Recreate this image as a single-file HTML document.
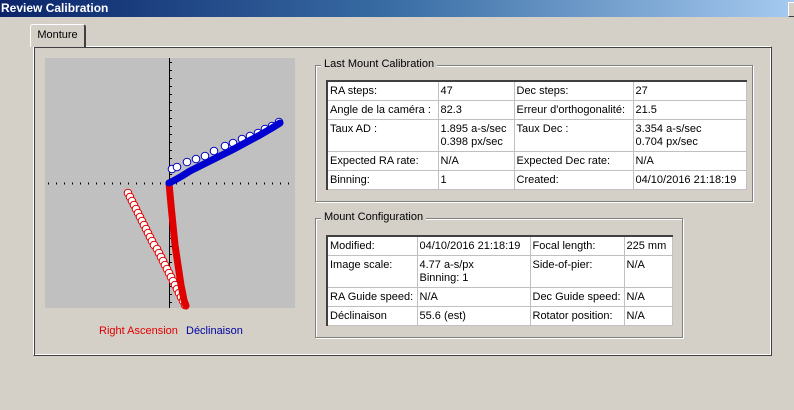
<!DOCTYPE html>
<html><head><meta charset="utf-8"><style>
body{margin:0;width:794px;height:410px;background:#d4d0c8;font-family:"Liberation Sans",sans-serif;font-size:11px;position:relative;overflow:hidden;color:#000}
.title{position:absolute;left:0;top:0;width:794px;height:17px;background:linear-gradient(90deg,#0a246a,#3a6ea5 50%,#a6caf0);color:#fff;font-weight:bold;font-size:12px;line-height:17px;padding-left:1px}
.close{position:absolute;left:788px;top:2px;width:12px;height:13px;background:#d4d0c8;border:1px solid #fff;border-right-color:#404040;border-bottom-color:#404040}
.tab{position:absolute;left:30px;top:24px;width:53px;height:22px;background:#d4d0c8;border:1px solid #fff;border-bottom:none;border-right:2px solid #404040;border-radius:3px 3px 0 0;line-height:20px;text-align:center;z-index:2}
.panel{position:absolute;left:33px;top:46px;width:737px;height:308px;border:1px solid #fff;border-right-color:#404040;border-bottom-color:#404040;box-shadow:inset 1px 1px 0 #404040,inset -1px -1px 0 #fff}
.grp{position:absolute;border:1px solid #808080;box-shadow:1px 1px 0 #fff,inset 1px 1px 0 #fff}
.grp .lg{position:absolute;top:-8px;left:5px;background:#d4d0c8;padding:0 3px;font-size:11px}
table{position:absolute;border-collapse:collapse;background:#fff;border:1px solid #808080;border-top:2px solid #404040;border-left:2px solid #404040}
td{border:1px solid #c0c0c0;padding:3px 2px 2px 2px;vertical-align:top;line-height:13px;white-space:nowrap;font-size:11px;box-sizing:border-box}
tr{height:19px}
tr.t{height:32px}
</style></head><body>
<div class="title">Review Calibration</div>
<div class="close"></div>
<div class="tab">Monture</div>
<div class="panel"></div>
<svg style="position:absolute;left:0;top:0" width="794" height="410">
<rect x="45" y="58" width="250" height="250" fill="#c0c0c0"/>
<line x1="169.5" y1="58" x2="169.5" y2="308" stroke="#000" stroke-width="1"/>
<line x1="171" y1="62" x2="171" y2="308" stroke="#000" stroke-width="2" stroke-dasharray="1 7"/>
<line x1="48" y1="183.5" x2="295" y2="183.5" stroke="#000" stroke-width="2" stroke-dasharray="1 7"/>
<g fill="#fff" stroke="#e00000" stroke-width="1">
<circle cx="128" cy="193" r="3.8"/><circle cx="130" cy="197" r="3.8"/><circle cx="132" cy="201" r="3.8"/><circle cx="134" cy="205" r="3.8"/><circle cx="136" cy="209" r="3.8"/><circle cx="138" cy="213" r="3.8"/><circle cx="140" cy="217" r="3.8"/><circle cx="142" cy="221" r="3.8"/><circle cx="144" cy="225" r="3.8"/><circle cx="146" cy="229" r="3.8"/><circle cx="148" cy="233" r="3.8"/><circle cx="150" cy="237" r="3.8"/><circle cx="152" cy="241" r="3.8"/><circle cx="154" cy="245" r="3.8"/><circle cx="157" cy="249" r="3.8"/><circle cx="159" cy="253" r="3.8"/><circle cx="161" cy="257" r="3.8"/><circle cx="163" cy="261" r="3.8"/><circle cx="165" cy="265" r="3.8"/><circle cx="167" cy="269" r="3.8"/><circle cx="169" cy="273" r="3.8"/><circle cx="171" cy="277" r="3.8"/><circle cx="173" cy="281" r="3.8"/><circle cx="175" cy="285" r="3.8"/><circle cx="177" cy="289" r="3.8"/><circle cx="179" cy="293" r="3.8"/><circle cx="181" cy="297" r="3.8"/><circle cx="183" cy="301" r="3.8"/><circle cx="185" cy="305" r="3.8"/>
</g>
<polyline points="169,183 171,205 173,225 175,245 178,265 181,285 184,300 186,306" fill="none" stroke="#e00000" stroke-width="7" stroke-linecap="round"/>
<g fill="#fff" stroke="#0000c0" stroke-width="1">
<circle cx="172" cy="169" r="3.8"/><circle cx="177" cy="167" r="3.8"/><circle cx="187" cy="162" r="3.8"/><circle cx="196" cy="159" r="3.8"/><circle cx="205" cy="156" r="3.8"/><circle cx="214" cy="151" r="3.8"/><circle cx="225" cy="146" r="3.8"/><circle cx="233" cy="143" r="3.8"/><circle cx="242" cy="139" r="3.8"/><circle cx="250" cy="136" r="3.8"/><circle cx="258" cy="133" r="3.8"/><circle cx="265" cy="129" r="3.8"/><circle cx="272" cy="126" r="3.8"/><circle cx="279" cy="122" r="3.8"/>
</g>
<polyline points="169,183 175,180 182,176 190,171 200,166 210,161 220,156 232,150 245,143 260,135 272,128 280,123" fill="none" stroke="#0000d0" stroke-width="7" stroke-linecap="round" stroke-linejoin="round"/>
<text x="99" y="334" fill="#e00000" font-family="Liberation Sans, sans-serif" font-size="11">Right Ascension</text>
<text x="186" y="334" fill="#0000a0" font-family="Liberation Sans, sans-serif" font-size="11">Déclinaison</text>
</svg>
<div class="grp" style="left:315px;top:65px;width:436px;height:135px"><span class="lg">Last Mount Calibration</span></div>
<table style="left:326px;top:80px;width:421px">
<tr><td style="width:111px">RA steps:</td><td style="width:76px">47</td><td style="width:119px">Dec steps:</td><td>27</td></tr>
<tr><td>Angle de la caméra :</td><td>82.3</td><td>Erreur d'orthogonalité:</td><td>21.5</td></tr>
<tr class="t"><td>Taux AD :</td><td>1.895 a-s/sec<br>0.398 px/sec</td><td>Taux Dec :</td><td>3.354 a-s/sec<br>0.704 px/sec</td></tr>
<tr><td>Expected RA rate:</td><td>N/A</td><td>Expected Dec rate:</td><td>N/A</td></tr>
<tr><td>Binning:</td><td>1</td><td>Created:</td><td>04/10/2016 21:18:19</td></tr>
</table>
<div class="grp" style="left:315px;top:218px;width:366px;height:118px"><span class="lg">Mount Configuration</span></div>
<table style="left:326px;top:235px;width:347px">
<tr><td style="width:90px">Modified:</td><td style="width:113px">04/10/2016 21:18:19</td><td style="width:94px">Focal length:</td><td>225 mm</td></tr>
<tr class="t"><td>Image scale:</td><td>4.77 a-s/px<br>Binning: 1</td><td>Side-of-pier:</td><td>N/A</td></tr>
<tr><td>RA Guide speed:</td><td>N/A</td><td>Dec Guide speed:</td><td>N/A</td></tr>
<tr><td>Déclinaison</td><td>55.6 (est)</td><td>Rotator position:</td><td>N/A</td></tr>
</table>
</body></html>
